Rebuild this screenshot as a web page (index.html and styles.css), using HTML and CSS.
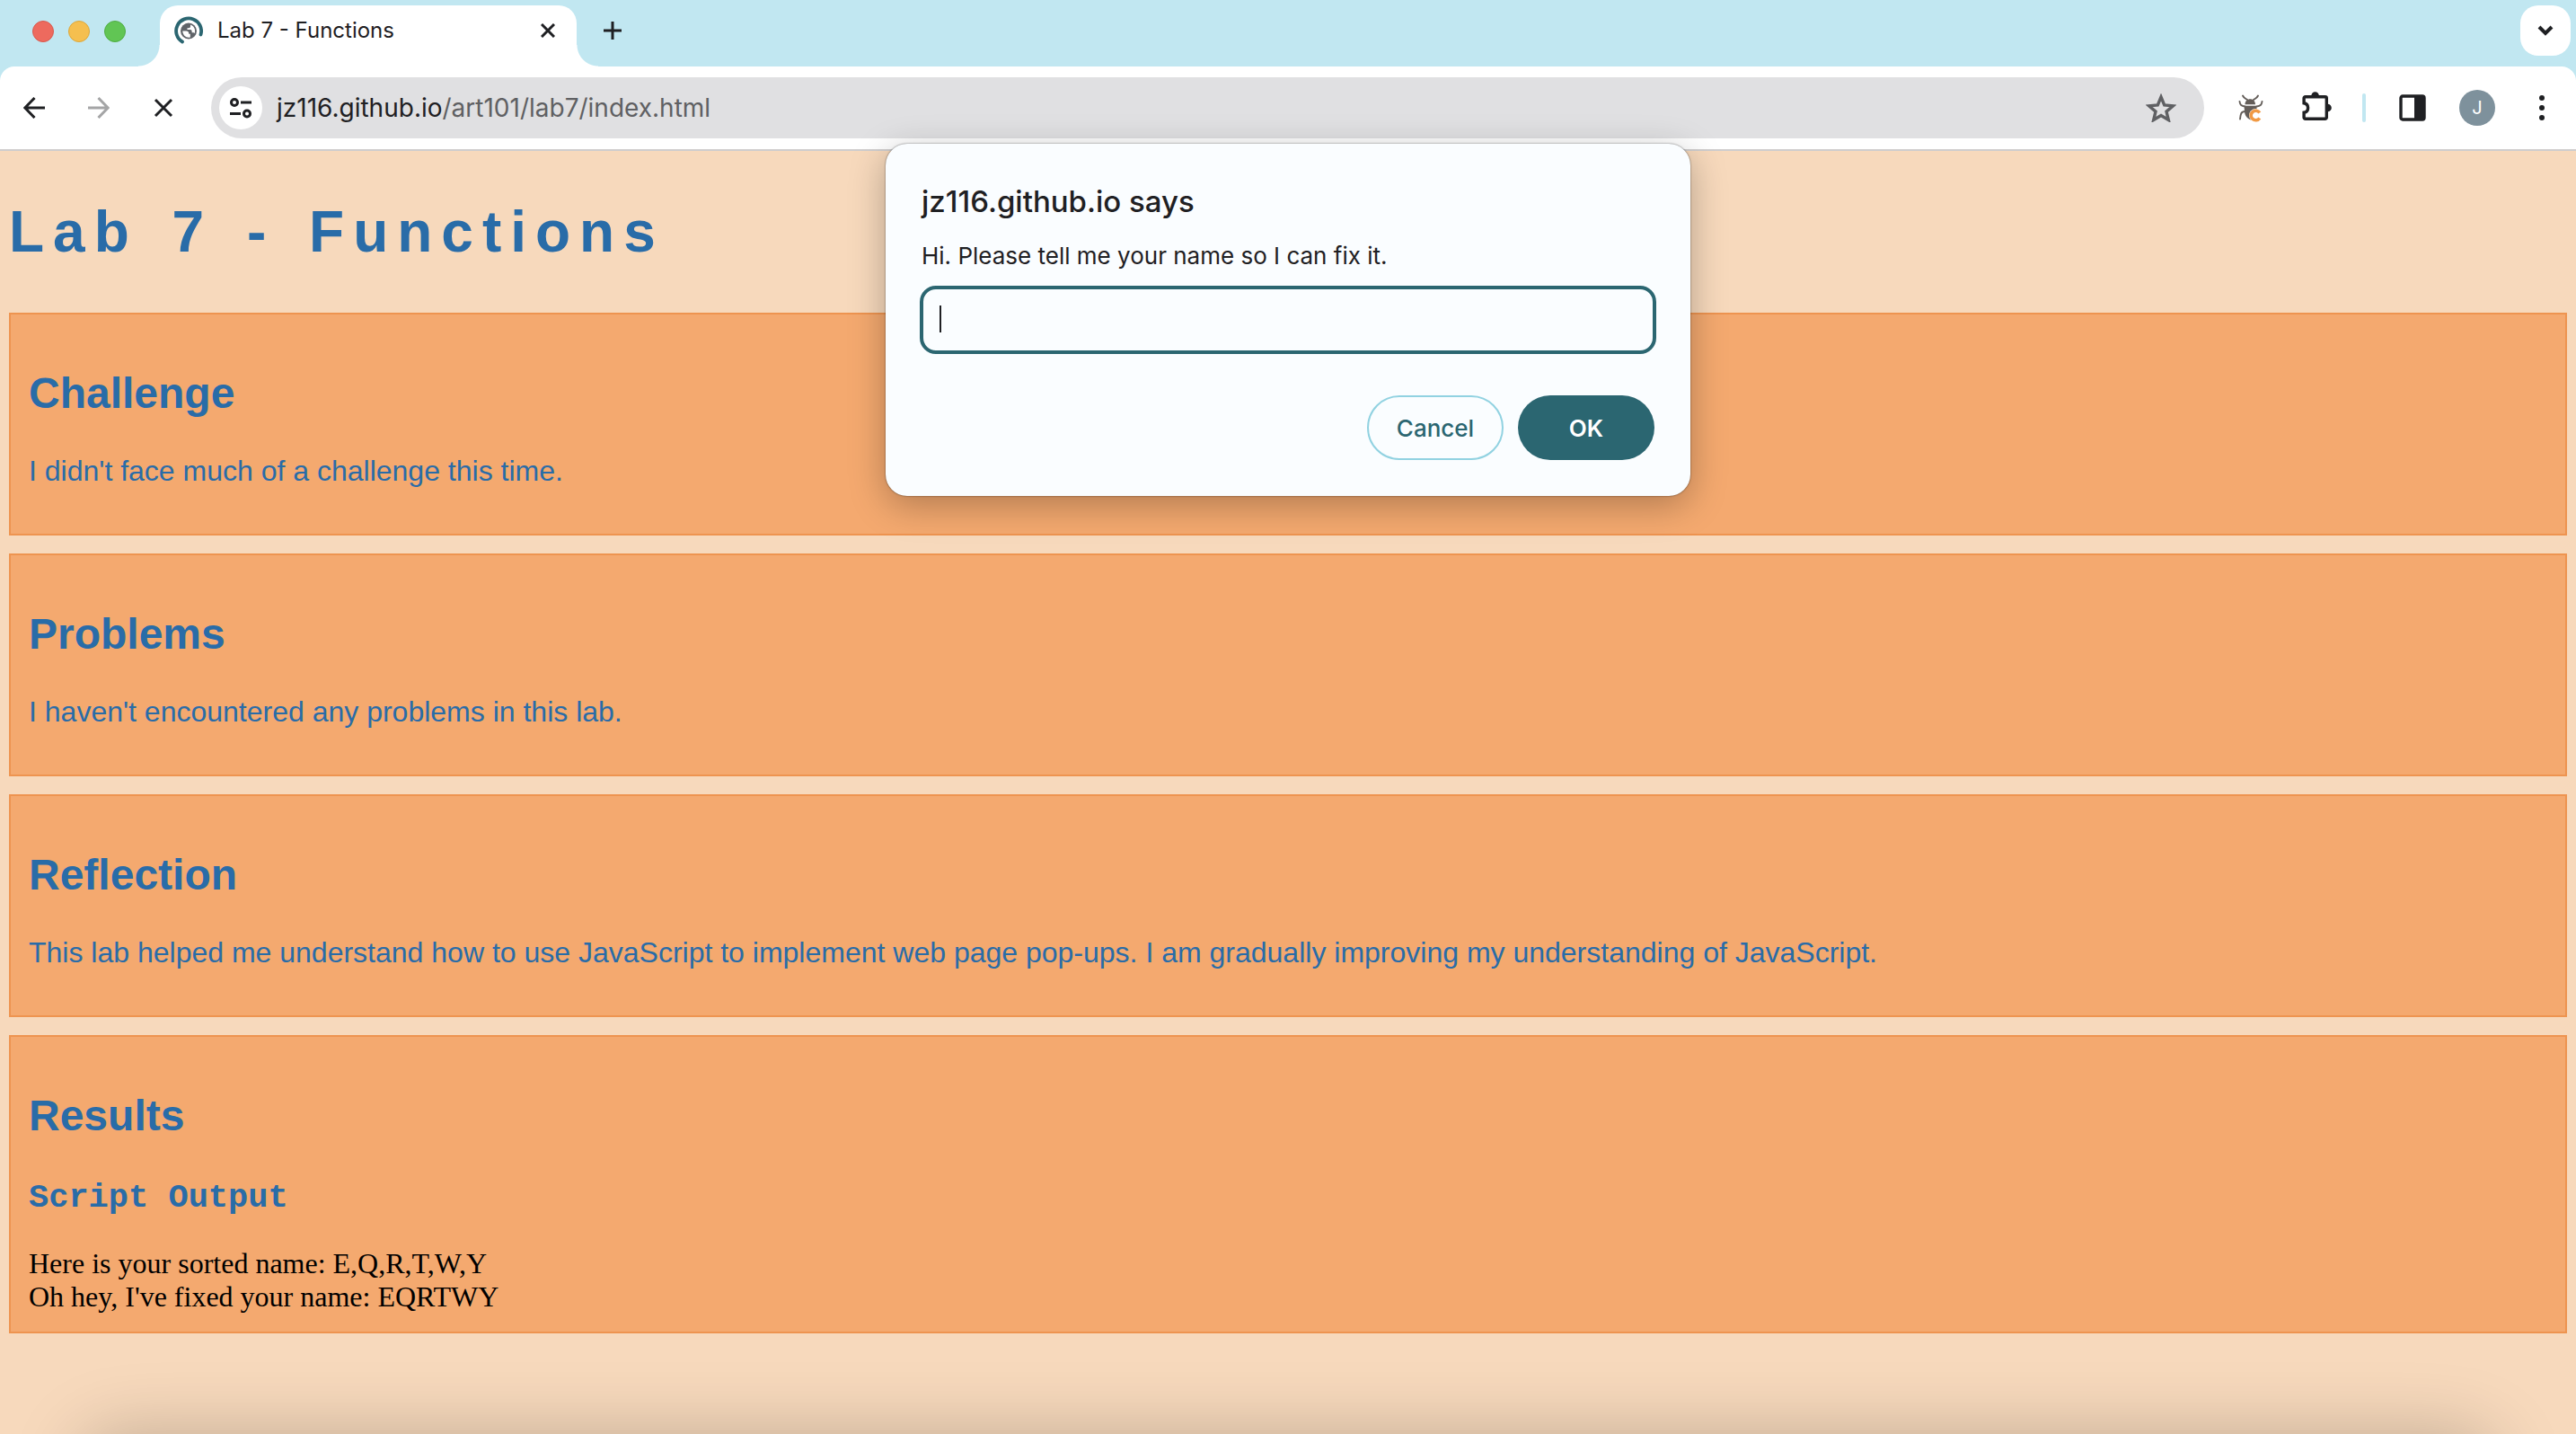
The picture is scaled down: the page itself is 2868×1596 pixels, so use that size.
FILE: index.html
```html
<!DOCTYPE html>
<html lang="en">
<head>
<meta charset="utf-8">
<title>Lab 7 - Functions</title>
<link rel="stylesheet" href="styles.css">
</head>
<body>
<header class="browser">
  <div class="tabstrip">
    <div class="lights">
      <span class="light light-red"></span>
      <span class="light light-yellow"></span>
      <span class="light light-green"></span>
    </div>
    <div class="tab">
      <svg class="favicon" viewBox="0 0 32 32" aria-hidden="true">
        <path d="M9 28.500A14 14 0 1 1 29.500 20.500" fill="none" stroke="#2b6671" stroke-width="3.800" stroke-linecap="round"/>
        <circle cx="16" cy="16.500" r="9" fill="#5f6368"/>
        <path d="M9.300 16.500h4.200c1.600 0 2.700 1 2.700 2.400v.8h1.600v3.900c-4.500 1-8.500-2.600-8.500-7.100zM18 9.600v1.900c0 .9-.8 1.700-1.800 1.700h-1.700v1.700h3.400c1 0 1.700.8 1.700 1.700v1.700h1.700c.7 0 1.200.4 1.400 1C23.900 15.500 22.500 11 18 9.600z" fill="#fff"/>
      </svg>
      <span class="tab-title">Lab 7 - Functions</span>
      <button class="icon-button" aria-label="Close tab">
        <svg width="16" height="16" viewBox="0 0 16 16"><path d="M1 1l14 14M15 1L1 15" class="line"/></svg>
      </button>
    </div>
    <button class="icon-button new-tab" aria-label="New tab">
      <svg width="20" height="20" viewBox="0 0 20 20"><path d="M10 0v20M0 10h20" class="line"/></svg>
    </button>
    <button class="tab-search" aria-label="Search tabs">
      <svg width="18" height="12" viewBox="0 0 18 12"><path d="M2 2l7 7 7-7" class="line thick"/></svg>
    </button>
  </div>
  <div class="toolbar">
    <nav class="nav-buttons">
      <button class="icon-button" aria-label="Back">
        <svg width="24" height="24" viewBox="0 0 24 24"><path d="M24 12H2M12.500 1L1.800 12l10.700 11" class="line"/></svg>
      </button>
      <button class="icon-button faded" aria-label="Forward">
        <svg width="24" height="24" viewBox="0 0 24 24"><path d="M0 12h22M11.500 1l10.700 11-10.700 11" class="line"/></svg>
      </button>
      <button class="icon-button" aria-label="Stop loading">
        <svg width="24" height="24" viewBox="0 0 24 24"><path d="M3 3l18 18M21 3L3 21" class="line"/></svg>
      </button>
    </nav>
    <div class="omnibox">
      <button class="site-info" aria-label="View site information">
        <svg width="24" height="24" viewBox="0 0 24 24"><g fill="none" stroke="#1f2023" stroke-width="3"><circle cx="5" cy="6" r="3.500"/><path d="M12 6h12M0 18.500h12"/><circle cx="19" cy="18.500" r="3.500"/></g></svg>
      </button>
      <span class="url">jz116.github.io<span class="url-path">/art101/lab7/index.html</span></span>
      <button class="icon-button" aria-label="Bookmark this tab">
        <svg width="34" height="32" viewBox="0 0 34 32"><path d="M17 4l3.700 9 9.700.800-7.400 6.300 2.300 9.400L17 24.500l-8.300 5 2.300-9.400-7.400-6.300 9.700-.8z" fill="none" stroke="#5f6063" stroke-width="3.400"/></svg>
      </button>
    </div>
    <div class="extensions">
      <button class="icon-button" aria-label="Bug tracker extension">
        <svg width="40" height="32" viewBox="0 0 30 32">
          <g fill="none" stroke="#635d59" stroke-width="1.900" stroke-linecap="round" stroke-linejoin="round"><path d="M6 2.500c1.500 3 3 3 5 4.500M23 2.500c-1.500 3-3 3-5 4.500M2.500 9c.5 4 2 5 6 5.500M27.500 9c-.5 4-2 5-6 5.500M8.500 20C4 20 3.500 23 3 28.500"/></g>
          <path d="M8.500 12.300c0-8 11.500-8 11.500 0zM7.500 13.800h14v6l-6 10c-4.500-1.500-7-5-7.500-9z" fill="#635d59"/>
          <circle cx="20.500" cy="24.500" r="7.500" fill="#fff"/>
          <path d="M24.800 21.500a5.300 5.300 0 1 0 0 6" fill="none" stroke="#f19a44" stroke-width="3.600"/>
        </svg>
      </button>
      <button class="icon-button" aria-label="Extensions">
        <svg class="puzzle" width="34" height="34" viewBox="0 0 34 34"><path d="M3.700 4.700h22a1.600 1.600 0 0 1 1.600 1.600v21.400a1.600 1.600 0 0 1-1.600 1.600h-22a1.600 1.600 0 0 1-1.600-1.600v-5.400c6-1 6-9.600 0-10.600V6.300a1.600 1.600 0 0 1 1.600-1.600z" fill="none" stroke="#1f2023" stroke-width="3.400"/><path d="M10.300 3.500a4.300 4.300 0 0 1 8.600 0zM28.500 12.700a4.300 4.300 0 0 1 0 8.600z" fill="#1f2023"/></svg>
      </button>
      <span class="divider"></span>
      <button class="icon-button" aria-label="Side panel">
        <svg width="30" height="30" viewBox="0 0 30 30"><rect x="2" y="2" width="26" height="26" rx="2" fill="none" stroke="#1f2023" stroke-width="3.400"/><path d="M17 2h11v26H17z" fill="#1f2023"/></svg>
      </button>
      <button class="avatar" aria-label="Profile">J</button>
      <button class="icon-button" aria-label="Menu">
        <svg width="8" height="28" viewBox="0 0 8 28"><g fill="#1f2023"><circle cx="4" cy="3" r="3"/><circle cx="4" cy="14" r="3"/><circle cx="4" cy="25" r="3"/></g></svg>
      </button>
    </div>
  </div>
</header>

<main class="page">
  <h1>Lab 7 - Functions</h1>
  <section class="card">
    <h2>Challenge</h2>
    <p>I didn't face much of a challenge this time.</p>
  </section>
  <section class="card">
    <h2>Problems</h2>
    <p>I haven't encountered any problems in this lab.</p>
  </section>
  <section class="card">
    <h2>Reflection</h2>
    <p>This lab helped me understand how to use JavaScript to implement web page pop-ups. I am gradually improving my understanding of JavaScript.</p>
  </section>
  <section class="card">
    <h2>Results</h2>
    <h3>Script Output</h3>
    <div class="output">Here is your sorted name: E,Q,R,T,W,Y<br>Oh hey, I've fixed your name: EQRTWY</div>
  </section>
</main>

<form class="prompt" role="dialog" aria-labelledby="prompt-title">
  <div class="prompt-title" id="prompt-title">jz116.github.io says</div>
  <label class="prompt-message" for="name">Hi. Please tell me your name so I can fix it.</label>
  <div class="field">
    <input class="prompt-input" id="name" type="text">
    <span class="caret"></span>
  </div>
  <div class="actions">
    <button class="action cancel" type="button">Cancel</button>
    <button class="action ok" type="button">OK</button>
  </div>
</form>
<div class="dock-shadow"></div>
</body>
</html>
```
FILE: styles.css
```css
* { box-sizing: border-box; }

body {
  margin: 0;
  min-height: 100vh;
  background: #f7d9bc;
  font-family: Inter, "Liberation Sans", sans-serif;
  color: #1f2023;
}

button {
  margin: 0;
  padding: 0;
  border: 0;
  background: none;
  font: inherit;
  color: inherit;
}

svg { display: block; flex: none; }

.line { fill: none; stroke: #1f2023; stroke-width: 3; }
.line.thick { stroke-width: 4; }
.faded { opacity: 0.4; }

/* Browser chrome */
.browser {
  background: #c1e7f1;
  border-bottom: 2px solid #cfcdcd;
}

.tabstrip {
  display: flex;
  align-items: flex-start;
  height: 74px;
  padding: 6px 6px 0 36px;
}

.lights {
  display: flex;
  gap: 16px;
  padding: 17px 38px 0 0;
}

.light { width: 24px; height: 24px; border-radius: 50%; border: 1px solid; }
.light-red { background: #ed6a5e; border-color: #d9584d; }
.light-yellow { background: #f5bf4f; border-color: #dda73b; }
.light-green { background: #61c554; border-color: #50ad43; }

.tab {
  position: relative;
  display: flex;
  align-items: center;
  gap: 16px;
  width: 464px;
  height: 68px;
  padding: 0 24px 12px 16px;
  border-radius: 20px 20px 0 0;
  background: #fff;
}

.tab::before,
.tab::after {
  content: "";
  position: absolute;
  bottom: 0;
  width: 24px;
  height: 24px;
}
.tab::before { right: 100%; background: radial-gradient(circle at 0 0, transparent 23px, #fff 24px); }
.tab::after { left: 100%; background: radial-gradient(circle at 100% 0, transparent 23px, #fff 24px); }

.favicon { width: 32px; height: 32px; }
.tab-title { flex: 1; font-size: 24px; line-height: 32px; }
.new-tab { margin: 18px 0 0 30px; }

.tab-search {
  display: flex;
  align-items: center;
  justify-content: center;
  width: 56px;
  height: 56px;
  margin-left: auto;
  border-radius: 20px;
  background: #fff;
}

.toolbar {
  display: flex;
  align-items: center;
  height: 92px;
  padding: 0 34px 0 26px;
  border-radius: 16px 16px 0 0;
  background: #fff;
}

.nav-buttons { display: flex; align-items: center; gap: 48px; margin-right: 41px; }

.omnibox {
  display: flex;
  align-items: center;
  flex: 1;
  height: 68px;
  padding: 0 31px 0 9px;
  border-radius: 34px;
  background: #e0e0e2;
}

.site-info {
  display: flex;
  align-items: center;
  justify-content: center;
  width: 48px;
  height: 48px;
  margin-right: 16px;
  border-radius: 50%;
  background: #fff;
}

.url { flex: 1; font-size: 28px; line-height: 36px; }
.url-path { color: #5f6063; }

.extensions { display: flex; align-items: center; gap: 37px; margin-left: 32px; }
.puzzle { overflow: visible; }
.divider { width: 4px; height: 32px; margin-left: -4px; border-radius: 2px; background: #c1e7f1; }
.avatar { width: 40px; height: 40px; margin-right: 11px; border-radius: 50%; background: #7e919c; color: #fff; font-size: 20px; }

/* Page */
.page { padding: 0 10px; color: #296ca8; font-family: "Liberation Sans", Arial, sans-serif; }

h1 { margin: 53px 0; font-size: 64px; line-height: 74px; letter-spacing: 10px; word-spacing: 10px; }

.card {
  margin-bottom: 20px;
  padding: 20px;
  border: 2px solid #ee9450;
  background: #f4a96f;
}

h2 { margin: 40px 0; font-size: 48px; line-height: 56px; }
h3 { margin: 42px 0 34px; font: bold 37px/42px "Liberation Mono", "Courier New", monospace; }
.card p { margin: 40px 0 32px; font-size: 32px; line-height: 36px; }
.output { color: #000; font: 32px/37px "Liberation Serif", "Times New Roman", serif; }

/* Prompt dialog */
.prompt {
  position: absolute;
  top: 160px;
  left: 50%;
  width: 896px;
  transform: translateX(-50%);
  padding: 44px 38px 40px;
  border-radius: 24px;
  background: #fafdff;
  box-shadow: 0 0 2px rgba(0, 0, 0, 0.6), 0 10px 40px rgba(0, 0, 0, 0.28);
}

.prompt-title { padding-left: 2px; font-size: 33px; line-height: 40px; font-weight: 500; }
.prompt-message { display: block; margin: 23px 0 15px; padding-left: 2px; font-size: 26px; line-height: 36px; }
.field { position: relative; }

.prompt-input {
  display: block;
  width: 100%;
  height: 76px;
  padding: 0 20px;
  border: 4px solid #2b6671;
  border-radius: 18px;
  outline: 0;
  background: transparent;
  font: inherit;
  font-size: 26px;
}

.caret { position: absolute; top: 22px; left: 22px; width: 2px; height: 30px; background: #1f2023; }
.actions { display: flex; justify-content: flex-end; gap: 16px; margin: 46px 2px 0 0; }
.action { width: 152px; height: 72px; border-radius: 36px; font-size: 26px; font-weight: 500; }
.cancel { border: 2px solid #91d2e1; color: #2b6671; }
.ok { background: #2b6671; color: #fff; font-weight: 600; }

/* Shadow cast up from the dock */
.dock-shadow {
  position: fixed;
  right: 90px;
  bottom: -100px;
  left: 90px;
  height: 100px;
  border-radius: 40px;
  box-shadow: 0 0 80px rgba(0, 0, 0, 0.22);
  pointer-events: none;
}
```
